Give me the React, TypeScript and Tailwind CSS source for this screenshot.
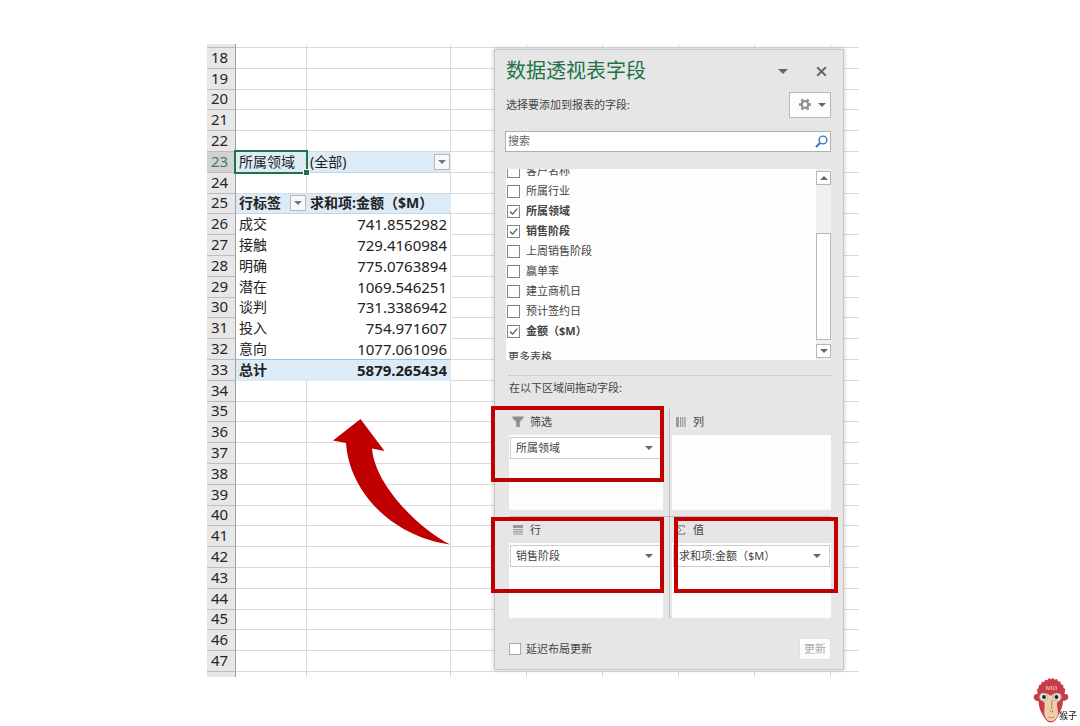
import React, { useState } from 'react';

type PivotRow = { label: string; value: string };

const pivotRows: Record<number, PivotRow> = {
  26: { label: '成交', value: '741.8552982' },
  27: { label: '接触', value: '729.4160984' },
  28: { label: '明确', value: '775.0763894' },
  29: { label: '潜在', value: '1069.546251' },
  30: { label: '谈判', value: '731.3386942' },
  31: { label: '投入', value: '754.971607' },
  32: { label: '意向', value: '1077.061096' },
};

const rowNumbers = Array.from({ length: 30 }, (_, i) => i + 18);

const initialFields = [
  { name: '客户名称', checked: false },
  { name: '所属行业', checked: false },
  { name: '所属领域', checked: true },
  { name: '销售阶段', checked: true },
  { name: '上周销售阶段', checked: false },
  { name: '赢单率', checked: false },
  { name: '建立商机日', checked: false },
  { name: '预计签约日', checked: false },
  { name: '金额（$M）', checked: true },
];

const Caret: React.FC<{ className?: string; up?: boolean }> = ({ className = 'w-2 h-1', up }) => (
  <svg className={`shrink-0 ${className}`} viewBox="0 0 8 4" fill="currentColor" aria-hidden="true">
    <path d={up ? 'M0 4L4 0l4 4z' : 'M0 0h8L4 4z'} />
  </svg>
);

const FilterButton: React.FC<{ label: string }> = ({ label }) => (
  <button aria-label={label} className="w-4 h-4 shrink-0 flex items-center justify-center border border-[#b4b8bc] bg-[#f8f9fa] text-[#777]">
    <Caret />
  </button>
);

const FillerCells: React.FC = () => (
  <>
    {[0, 1, 2, 3, 4].map(i => (
      <td key={i} className="border-b border-[#dadada]" />
    ))}
    <td className="border-b border-[#dadada]" />
  </>
);

const SheetRow: React.FC<{ n: number }> = ({ n }) => {
  const pivot = pivotRows[n];
  let cells = (
    <>
      <td className="border-b border-r border-[#dadada]" />
      <td className="border-b border-r border-[#dadada]" />
    </>
  );

  if (n === 23) {
    cells = (
      <>
        <td className="relative bg-[#ddebf7] border-b border-[#bdd7ee] pl-[3px]">
          所属领域
          <div className="absolute -left-[2px] -top-[2px] -right-px -bottom-[2px] border-2 border-[#217346]">
            <div className="absolute -right-[3px] -bottom-[3px] w-[5px] h-[5px] bg-[#217346] outline outline-white" />
          </div>
        </td>
        <td className="bg-[#ddebf7] border-b border-[#bdd7ee] pl-[3px] pr-px">
          <div className="flex items-center justify-between">
            (全部)
            <FilterButton label="筛选所属领域" />
          </div>
        </td>
      </>
    );
  } else if (n === 25) {
    cells = (
      <>
        <td className="bg-[#ddebf7] border-b border-[#bdd7ee] pl-[3px] font-bold">
          <div className="flex items-center justify-between pr-px">
            行标签
            <FilterButton label="筛选行标签" />
          </div>
        </td>
        <td className="bg-[#ddebf7] border-b border-[#bdd7ee] pl-[3px] font-bold">求和项:金额（$M）</td>
      </>
    );
  } else if (n === 33) {
    cells = (
      <>
        <td className="bg-[#ddebf7] border-b border-[#ddebf7] pl-[3px] font-bold">总计</td>
        <td className="bg-[#ddebf7] border-b border-[#ddebf7] pr-1 text-right text-[15px] font-bold">5879.265434</td>
      </>
    );
  } else if (pivot) {
    const edge = n === 32 ? 'border-b border-b-[#9bc2e6]' : 'border-b border-b-white';
    cells = (
      <>
        <td className={`pl-[3px] ${edge}`}>{pivot.label}</td>
        <td className={`pr-[3px] text-right text-[15px] border-r border-r-[#dadada] ${edge}`}>{pivot.value}</td>
      </>
    );
  }

  return (
    <tr>
      <th
        scope="row"
        className={`border-b border-r border-b-[#bcbcbc] border-r-[#a0a0a0] pr-[3px] pb-[2px] text-[15px] font-normal ${n === 23 ? 'bg-[#d2d2d2] text-[#3f7d5b]' : 'bg-[#e7e7e7] text-[#262626]'}`}
      >
        {n}
      </th>
      {cells}
      <FillerCells />
    </tr>
  );
};

const Sheet: React.FC = () => (
  <table className="w-full h-[633px] table-fixed border-separate border-spacing-0 text-[14px] leading-4 text-[#222] whitespace-nowrap">
    <colgroup>
      <col className="w-[29px]" />
      <col className="w-[71px]" />
      <col className="w-[144px]" />
      <col className="w-[76px]" />
      <col className="w-[76px]" />
      <col className="w-[76px]" />
      <col className="w-[76px]" />
      <col className="w-[76px]" />
      <col />
    </colgroup>
    <tbody>
      <tr className="h-1">
        <td className="border-b border-r border-b-[#bcbcbc] border-r-[#a0a0a0] bg-[#e7e7e7]" />
        {[0, 1, 2, 3, 4, 5, 6].map(i => <td key={i} className="border-b border-r border-[#dadada]" />)}
        <td className="border-b border-[#dadada]" />
      </tr>
      {rowNumbers.map(n => <SheetRow key={n} n={n} />)}
      <tr className="h-[5px]">
        <td className="border-r border-[#a0a0a0] bg-[#e7e7e7]" />
        {[0, 1, 2, 3, 4, 5, 6].map(i => <td key={i} className="border-r border-[#dadada]" />)}
        <td />
      </tr>
    </tbody>
  </table>
);

const FunnelIcon = () => (
  <svg className="w-3 h-3 -mx-px" viewBox="0 0 12 12" fill="#8f8f8f" aria-hidden="true"><path d="M.5.5h11v1.600L7.800 6v5H4.200V6L.5 2.100z" /></svg>
);

const ColumnsIcon = () => (
  <svg className="w-[10px] h-[10px]" viewBox="0 0 10 10" fill="#9a9a9a" aria-hidden="true"><path d="M0 0h3v10H0zM4 0h1.2v10H4zM6.2 0h1.2v10H6.2zM8.4 0h1.2v10H8.4z" /></svg>
);

const RowsIcon = () => (
  <svg className="w-[10px] h-[10px]" viewBox="0 0 10 10" fill="#9a9a9a" aria-hidden="true"><path d="M0 0h10v3H0zM0 4h10v1.2H0zM0 6.2h10v1.2H0zM0 8.4h10v1.2H0z" /></svg>
);

const SigmaIcon = () => (
  <svg className="w-[10px] h-[10px]" viewBox="0 0 10 10" fill="none" stroke="#777" aria-hidden="true"><path d="M8.5 2.5V.8H1.2L5 5 1.2 9.2h7.6V7.5" /></svg>
);

const Zone: React.FC<{ title: string; icon: React.ReactNode; item?: string }> = ({ title, icon, item }) => (
  <section>
    <h3 className="h-[26px] flex items-center gap-[7px] pl-1">
      {icon}
      {title}
    </h3>
    <div className="h-[75px] bg-[#fdfdfd] px-px pt-[2px]">
      {item && (
        <button className="w-full h-[22px] flex items-center justify-between border border-[#cdcdcd] bg-white pl-[5px] pr-2">
          {item}
          <Caret className="w-2 h-1 text-[#666]" />
        </button>
      )}
    </div>
  </section>
);

const FieldsPanel: React.FC = () => {
  const [fields, setFields] = useState(initialFields);
  const [deferred, setDeferred] = useState(false);

  const toggle = (name: string) => {
    setFields(prev => prev.map(f => (f.name === name ? { ...f, checked: !f.checked } : f)));
  };

  return (
    <aside className="absolute left-[287px] top-[5px] w-[350px] border border-[#c8c8c8] bg-[#e6e6e6] pl-[11px] pr-3 pt-[7px] pb-[9px] text-[11px] leading-4 text-[#444] shadow-[0_0_4px_rgba(0,0,0,0.25)]">
      <header className="h-7 flex items-center text-[#666]">
        <h2 className="flex-grow text-[20px] leading-7 text-[#217346]">数据透视表字段</h2>
        <button aria-label="任务窗格选项" className="mr-7"><Caret className="w-[10px] h-[5px]" /></button>
        <button aria-label="关闭" className="mr-1">
          <svg className="w-[11px] h-[11px]" viewBox="0 0 11 11" fill="none" stroke="#666" strokeWidth="2" aria-hidden="true"><path d="M1.2 1.2l8.6 8.6M9.8 1.2L1.2 9.8" /></svg>
        </button>
      </header>

      <div className="mt-[7px] flex items-center justify-between">
        <p>选择要添加到报表的字段:</p>
        <button aria-label="工具" className="w-[42px] h-[26px] flex items-center justify-between border border-[#b8b8b8] bg-[#fdfdfd] pl-2 pr-1 text-[#666]">
          <svg className="w-[14px] h-[14px]" viewBox="0 0 14 14" fill="none" stroke="#919191" aria-hidden="true">
            <circle cx="7" cy="6.5" r="3.3" strokeWidth="2.2" />
            <path d="M4.700 3.500L3.900 1.300M9.300 3.500l.8-2.200M4.700 9.500l-.8 2.200M9.300 9.500l.8 2.200M3.400 6.500H1M10.600 6.500H13" strokeWidth="2.600" />
          </svg>
          <Caret />
        </button>
      </div>

      <div className="mt-[13px] -ml-px h-[21px] flex items-center border border-[#b0b0b0] bg-white pr-[2px]">
        <input aria-label="搜索" placeholder="搜索" className="flex-grow h-full pl-[2px] pb-[2px] outline-none placeholder:text-[#666]" />
        <svg className="w-[13px] h-[13px]" viewBox="0 0 13 13" fill="none" stroke="#3a78b5" aria-hidden="true">
          <circle cx="8" cy="5" r="3.9" strokeWidth="1.4" />
          <path d="M5 8L1 12" strokeWidth="2.2" />
        </svg>
      </div>

      <div className="mt-[17px] h-[191px] flex overflow-hidden bg-[#fdfdfd]">
        <div className="flex-grow pl-px">
          <ul className="-mt-2">
            {fields.map(f => (
              <li key={f.name}>
                <label className={`h-5 flex items-center gap-[6px] ${f.checked ? 'font-bold' : ''}`}>
                  <span className="relative w-[13px] h-[13px]">
                    <input
                      type="checkbox"
                      checked={f.checked}
                      onChange={() => toggle(f.name)}
                      className="peer block w-[13px] h-[13px] appearance-none border border-[#858585] bg-white"
                    />
                    <svg className="absolute inset-0 w-[13px] h-[13px] hidden peer-checked:block pointer-events-none" viewBox="0 0 13 13" fill="none" stroke="#555" strokeWidth="1.2" aria-hidden="true"><path d="M3 6.5l2.5 2.7L10.3 3.6" /></svg>
                  </span>
                  {f.name}
                </label>
              </li>
            ))}
          </ul>
          <p className="mt-2 pl-px">更多表格</p>
        </div>
        <div className="w-[15px] pt-[2px] pb-[2px] flex flex-col bg-[#f0f0f0] text-[#666]">
          <button aria-label="向上滚动" className="h-[14px] flex items-center justify-center border border-[#b8b8b8] bg-white"><Caret up /></button>
          <div className="flex-grow" />
          <div className="h-[107px] mb-1 border border-[#b8b8b8] bg-white" />
          <button aria-label="向下滚动" className="h-[14px] flex items-center justify-center border border-[#b8b8b8] bg-white"><Caret /></button>
        </div>
      </div>

      <div className="ml-[3px]">
        <p className="mt-[15px] border-t border-dotted border-[#bbb] pt-1">在以下区域间拖动字段:</p>

        <div className="mt-[13px] grid grid-cols-[161px_1fr]">
          <div className="border-r border-[#bdbdbd] pr-[6px] pb-[6px]"><Zone title="筛选" icon={<FunnelIcon />} item="所属领域" /></div>
          <div className="pl-[2px] pb-[6px]"><Zone title="列" icon={<ColumnsIcon />} /></div>
          <div className="col-span-2 h-px bg-[#bdbdbd]" />
          <div className="border-r border-[#bdbdbd] pr-[6px]"><Zone title="行" icon={<RowsIcon />} item="销售阶段" /></div>
          <div className="pl-[2px]"><Zone title="值" icon={<SigmaIcon />} item="求和项:金额（$M）" /></div>
        </div>

        <footer className="mt-5 flex items-center justify-between">
          <label className="flex items-center gap-[5px]">
            <input type="checkbox" checked={deferred} onChange={e => setDeferred(e.target.checked)} className="w-3 h-3 appearance-none border border-[#aaa] bg-white checked:bg-[#777]" />
            延迟布局更新
          </label>
          <button disabled className="h-[22px] border border-[#e0e0e0] bg-[#fdfdfd] px-1 text-[#aaa]">更新</button>
        </footer>
      </div>
    </aside>
  );
};

const Monkey: React.FC = () => (
  <div className="fixed right-[3px] bottom-[3px] w-11 h-[46px]">
    <svg className="w-9 h-[46px]" viewBox="0 0 36 46" aria-hidden="true">
      <path
        d="M4.500 17L4 12l1.500-.5L6 8l2-.5.800-2.700 2.200.2 1.200-2.300 2.200.6L16 1l2 1.200L20.200 1l1.500 1.700 2.300-.6 1 2.200 2.400.3.600 2.600 2.200.7.300 3 1.700 1-.6 5.100c2.600-.4 4 1.200 3.700 3.200-.4 2.400-2.800 4-5.300 3.500-.2 5-1.600 9-4 13C24 41.500 21.500 45.500 18 45.500S12 42 9.500 37.500C7 33.500 5.700 29 5.500 24 3 24.400 1 23 .7 20.500.5 18.300 2 16.700 4.500 17z"
        fill="#c73c47"
      />
      <path d="M17 18.500c-2.500-3-7.500-3-10 0-.6 3.500 1.500 5.500 4.500 7 .5 4-.5 7-.2 10.500.3 4.500 3 8.300 6.700 8.300s6.700-3.800 7-8.300c.2-3.500-1.500-6.500-1-10.500 3-1.500 5-3.500 4.500-7-2.500-3-7.500-3-10 0z" fill="#efcfaa" />
      <circle cx="10.500" cy="20" r="4" fill="#e6e6e6" stroke="#8a8a8a" strokeWidth=".5" />
      <circle cx="24" cy="20" r="4" fill="#e6e6e6" stroke="#8a8a8a" strokeWidth=".5" />
      <circle cx="11" cy="20" r="1.900" fill="#222" />
      <circle cx="23.500" cy="20" r="1.900" fill="#222" />
      <path d="M19 23l-.5 9M16.500 33.500l2.500 1.800 1.300-2.300M15 40c2 1.200 4.500 1 6.500-.5" fill="none" stroke="#8c6d50" strokeWidth=".7" />
      <text x="18.500" y="12.500" fontSize="6" fontWeight="bold" fontFamily="Liberation Sans, sans-serif" textAnchor="middle" fill="#eeb5b0">M03</text>
    </svg>
    <span className="absolute right-0 bottom-[2px] text-[9px] leading-[10px] text-[#111]">猴子</span>
  </div>
);

const App: React.FC = () => {
  return (
    <main className="min-h-screen bg-white pt-11 pr-[14px] font-['Noto_Sans','Noto_Sans_CJK_SC',sans-serif]">
      <div className="relative w-full max-w-[652px] mx-auto">
        <Sheet />
        <FieldsPanel />

        {/* annotations over the sheet and the panel */}
        <svg className="absolute left-[126px] top-[374px] w-[118px] h-[128px] pointer-events-none" viewBox="333 418 118 128" aria-hidden="true">
          <path d="M360.5 419L333 440.5l13 2.5C349 490 390 536 450 544.5 418 528 375 485 372 448.5l12.500 2.500z" fill="#c00000" />
        </svg>
        <div className="absolute left-[284px] top-[362px] w-[173px] h-[76px] border-4 border-[#c00000] pointer-events-none" />
        <div className="absolute left-[284px] top-[473px] w-[173px] h-[76px] border-4 border-[#c00000] pointer-events-none" />
        <div className="absolute left-[467px] top-[473px] w-[164px] h-[76px] border-4 border-[#c00000] pointer-events-none" />
      </div>
      <Monkey />
    </main>
  );
};

export default App;
